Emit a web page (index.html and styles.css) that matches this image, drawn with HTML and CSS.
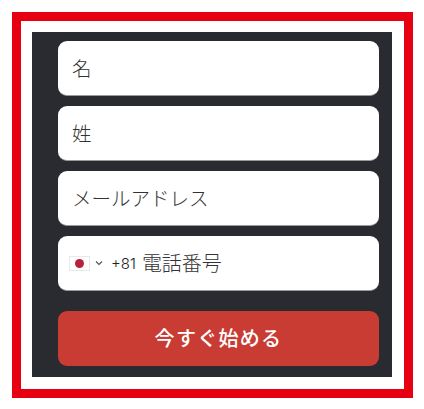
FILE: index.html
```html
<!DOCTYPE html>
<html lang="ja">
<head>
  <meta charset="UTF-8" />
  <title>今すぐ始める</title>
  <link rel="stylesheet" href="styles.css">
</head>
<body>
  <div class="frame">
    <form class="signup">
      <div class="field"><span class="placeholder">名</span></div>
      <div class="field"><span class="placeholder">姓</span></div>
      <div class="field"><span class="placeholder">メールアドレス</span></div>
      <div class="field field-phone">
        <span class="flag"><span class="flag-dot"></span></span>
        <svg class="chevron" width="8" height="6" viewBox="0 0 8 6" aria-hidden="true">
          <path d="M1 1.5 L4 4.5 L7 1.5" fill="none" stroke="#555" stroke-width="1.2" />
        </svg>
        <span class="dial-code">+81</span>
        <span class="placeholder placeholder-phone">電話番号</span>
      </div>
      <button class="submit" type="button">今すぐ始める</button>
    </form>
  </div>
</body>
</html>
```

FILE: styles.css
```css
body {
  margin: 0;
  padding: 12px 11px 11px 12px;
  background-color: #fff;
  font-family: "Noto Sans CJK JP", "Noto Sans", sans-serif;
}

.frame {
  box-sizing: border-box;
  width: 401px;
  height: 386px;
  border: 9px solid #e60012;
  padding: 11px;
  background-color: #fff;
}

.signup {
  display: flex;
  flex-direction: column;
  gap: 10px;
  width: 360px;
  height: 345px;
  box-sizing: border-box;
  padding: 9px 13px 11px 26px;
  background-color: #2a2b31;
}

.field {
  display: flex;
  align-items: center;
  height: 55px;
  box-sizing: border-box;
  padding-left: 14px;
  background-color: #fff;
  border-radius: 9px;
  border-bottom: 1px solid #9a9a9c;
}

.placeholder {
  margin-top: -2px;
  color: #333;
  font-size: 19.5px;
  font-weight: 300;
}

.field-phone {
  padding-left: 11px;
}

.flag {
  display: flex;
  align-items: center;
  justify-content: center;
  width: 21px;
  height: 15px;
  box-sizing: border-box;
  border: 1px solid #e8e8e8;
  background-color: #fff;
}

.flag-dot {
  width: 9px;
  height: 9px;
  border-radius: 50%;
  background-color: #b8213a;
}

.chevron {
  margin-left: 5px;
}

.dial-code {
  margin-left: 8px;
  color: #222;
  font-family: "Inter", sans-serif;
  font-size: 15px;
  font-weight: 300;
}

.placeholder-phone {
  margin-left: 6px;
  font-size: 20px;
}

.submit {
  height: 55px;
  margin-top: 10px;
  padding: 0 0 3px;
  border: 0;
  border-radius: 9px;
  background-color: #c83c34;
  color: #fff;
  font-family: inherit;
  font-size: 20px;
  font-weight: 500;
  letter-spacing: 1.3px;
}
```
